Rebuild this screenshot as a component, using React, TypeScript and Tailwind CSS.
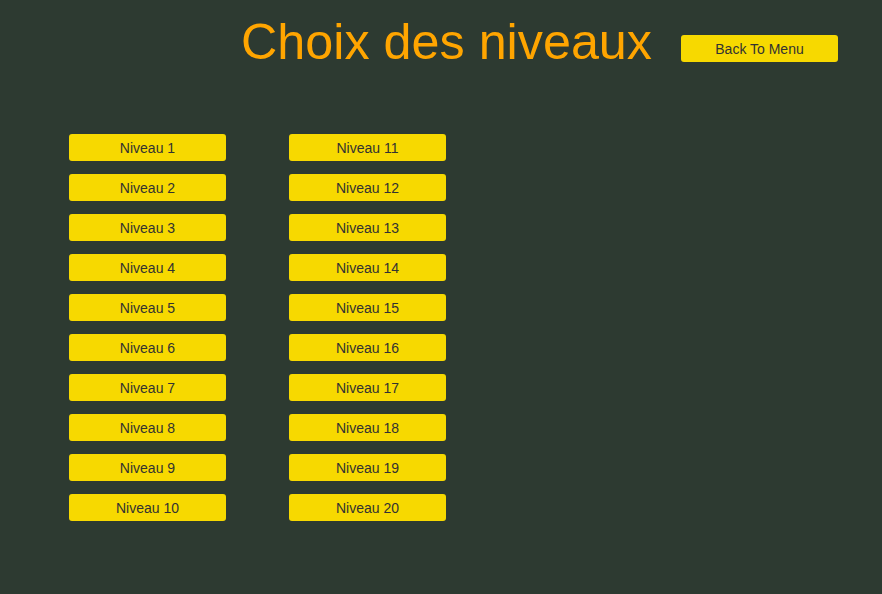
import React from 'react';

const levels = Array.from({ length: 20 }, (_, i) => i + 1);

function LevelButton({ label }: { label: string }) {
  return (
    <button className="w-[157px] h-[27px] rounded-[3px] bg-[#f7d900] text-[#323232] text-[14px] leading-none flex items-center justify-center">
      {label}
    </button>
  );
}

export default function App() {
  return (
    <div className="w-[882px] h-[594px] bg-[#2d3a31] overflow-hidden font-['Liberation_Sans',Arial,sans-serif]">
      <div className="flex items-start pt-[12px] pl-[241px]">
        <h1 className="text-[#ffa500] text-[50.3px] leading-[60px] font-normal">Choix des niveaux</h1>
        <div className="ml-auto mr-[44px] mt-[23px]">
          <LevelButton label="Back To Menu" />
        </div>
      </div>
      <div className="grid grid-flow-col grid-rows-10 w-fit gap-x-[63px] gap-y-[13px] pl-[69px] pt-[62px]">
        {levels.map((n) => (
          <LevelButton key={n} label={`Niveau ${n}`} />
        ))}
      </div>
    </div>
  );
}
